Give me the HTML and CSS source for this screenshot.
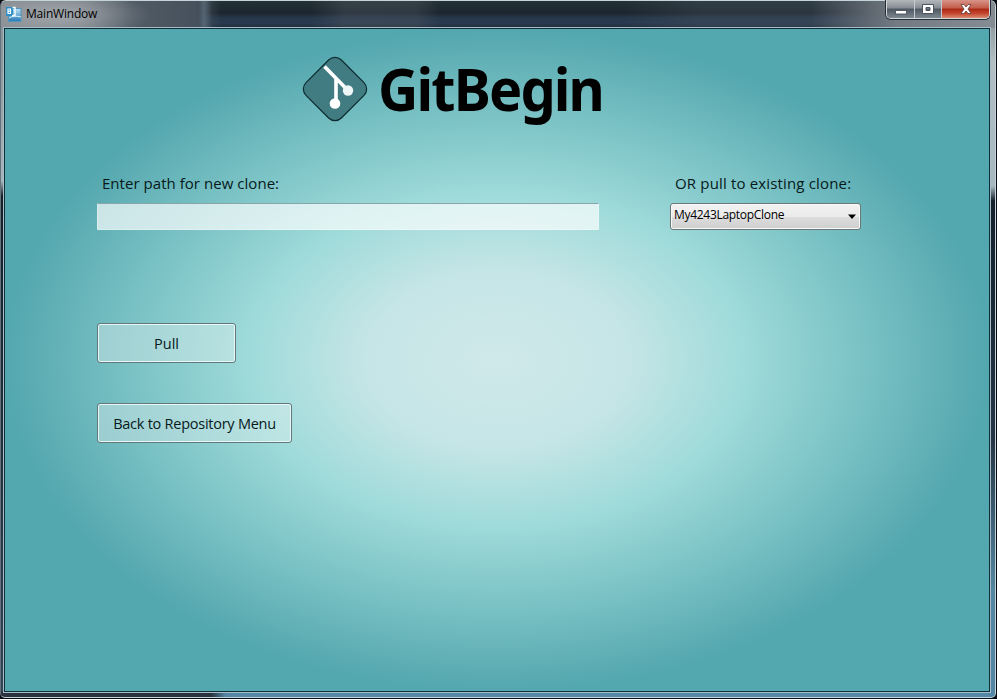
FILE: index.html
```html
<!DOCTYPE html>
<html lang="en">
<head>
<meta charset="utf-8">
<title>MainWindow</title>
<link rel="stylesheet" href="styles.css">
</head>
<body>
<div class="window">
  <header class="titlebar">
    <svg class="app-icon" viewBox="0 0 16 16" width="16" height="16">
      <defs><linearGradient id="sea" x1="0" y1="0" x2="0" y2="1"><stop offset="0" stop-color="#b9e2f6"/><stop offset="1" stop-color="#2478b4"/></linearGradient></defs>
      <rect x="2.500" y="2.500" width="12.500" height="13" fill="url(#sea)" stroke="#5594ba"/>
      <path d="M3 12q4-3 12-1" stroke="#d8f0fa" fill="none"/>
      <rect x="0" y="1" width="7" height="9" fill="#2f8fc5"/>
      <path d="M2 3h2.500v4.500H2zM2 5.200h2.500" fill="none" stroke="#fff" stroke-width="1.200"/>
      <path d="M6.500 1.500h2.500v8H6" fill="none" stroke="#eefaff" stroke-width="1.500"/>
    </svg>
    <span class="title">MainWindow</span>
    <div class="controls">
      <span class="control minimize"><svg width="12" height="6"><rect x=".5" y="1.500" width="11" height="3.500" fill="#fff" stroke="#545c66"/></svg></span>
      <span class="control maximize"><svg width="12" height="10"><path d="M.5.5h11v9H.5zM4 3.500v3h4v-3z" fill="#fff" fill-rule="evenodd" stroke="#4b535e"/></svg></span>
      <span class="control close"><svg width="12" height="10"><path d="M1 .5h3l2 2.500 2-2.500h3L8 5l3 4.500H8L6 7 4 9.500H1L4 5z" fill="#fff" stroke="#643b3b" stroke-width=".8"/></svg></span>
    </div>
  </header>
  <main class="client">
    <div class="brand">
      <svg class="logo" width="66" height="66" viewBox="0 0 66 66">
        <rect x="8" y="8" width="50" height="50" rx="9" transform="rotate(45 33 33)" fill="#417c82" stroke="#0d2b30" stroke-width="1.200"/>
        <path d="M22.500 10.500L46 34.500M34 22v26" fill="none" stroke="#fff" stroke-width="3.600"/>
        <circle cx="46" cy="34.500" r="5.200" fill="#eef6f7"/>
        <circle cx="33" cy="47.500" r="5.300" fill="#fff"/>
      </svg>
      <svg class="wordmark" width="250" height="100"><text x="-1" y="75" textLength="225" lengthAdjust="spacingAndGlyphs">GitBegin</text></svg>
    </div>
    <div class="fields">
      <div class="field">
        <label class="label new-label" for="path">Enter path for new clone:</label>
        <input class="path" id="path" type="text">
      </div>
      <div class="field">
        <span class="label old-label">OR pull to existing clone:</span>
        <div class="combo"><span class="value">My4243LaptopClone</span><svg width="8" height="5"><path d="M0 .5h8L4 5z"/></svg></div>
      </div>
    </div>
    <div class="actions">
      <button class="button pull"><span>Pull</span></button>
      <button class="button back"><span>Back to Repository Menu</span></button>
    </div>
  </main>
</div>
</body>
</html>
```
FILE: styles.css
```css
* { box-sizing: border-box; }
body { margin: 0; background: #080c12; overflow: hidden; font-family: "Open Sans", "Noto Sans", sans-serif; color: #07191b; }
.window {
  width: 996px; height: 698px; padding: 0 5px 5px 3px; display: flex; flex-direction: column;
  border: 1px solid #c5d4d8; border-left-color: #65727b; border-radius: 6px 6px 5px 5px;
  background:
    linear-gradient(90deg, #29323e 0 210px, #5588a6 225px) bottom / 100% 6px no-repeat,
    linear-gradient(#87929a 0, #8b969d 60px, #a9b5bc 180px, #15202b 195px, #263344 500px, #33455a) left / 5px 100% no-repeat,
    linear-gradient(#7d858c 0, #b2bec4 60px, #a9b8c0 185px, #14202c 200px, #273647 440px, #5487a2 590px, #5587a5) right / 6px 100% no-repeat,
    #24303d;
}
.titlebar {
  height: 27px; flex: none; display: flex; align-items: flex-start; margin: 0 -5px 0 -3px; padding-left: 5px;
  border-radius: 5px 5px 0 0;
  background:
    radial-gradient(ellipse 90px 26px at 60px 14px, rgba(182,186,190,.65), transparent),
    linear-gradient(90deg, transparent 197px, rgba(100,116,132,.65) 203px, transparent 211px),
    linear-gradient(90deg, #868b90 0, #777e85 80px, #515b65 130px, #46515d 195px, transparent 220px, transparent 810px, #737a82 895px, #858c94),
    linear-gradient(90deg, transparent 310px, rgba(80,88,98,.42) 345px, rgba(80,88,98,.38) 415px, transparent 440px, transparent 620px, rgba(80,90,102,.3) 700px),
    linear-gradient(#243136 0, #1b252e 12px, #27374b 17px, #293a50 22px, #202c38);
}
.app-icon { margin-top: 5px; }
.title { margin: 5px 0 0 4px; font-size: 12px; line-height: 16px; letter-spacing: -.2px; color: #000; }
.controls { margin: -1px 5px 0 auto; height: 19px; width: 104px; display: flex; border: 1px solid #d2d7da; box-shadow: 0 0 0 1px #252d35; border-top: 0; border-radius: 0 0 5px 5px; overflow: hidden; }
.control { display: flex; align-items: center; justify-content: center; background: linear-gradient(#b3b7bb, #858b92 45%, #4e5761 50%, #7d8790); border-right: 1px solid #c5cbd0; }
.minimize { width: 28px; padding-top: 5px; }
.maximize { width: 27px; }
.close { flex: 1; border: 0; background: linear-gradient(#d89488, #c25b48 45%, #a92815 50%, #c54730 75%, #d98b70); }
.client {
  flex: 1; border: 1px solid #112f3a; outline: 1px solid #a5bec5; display: flex; flex-direction: column;
  background: radial-gradient(ellipse 50% 50% at center, #d0e9ea 0, #c5e5e6 27%, #9fdbda 50%, #53a7ae 100%);
}
.brand { display: flex; height: 144px; padding: 27px 0 0 297px; }
.wordmark { margin: -20px 0 0 11px; }
.wordmark text { font: bold 60px "Noto Sans", "Open Sans", sans-serif; letter-spacing: -2px; fill: #000; }
.fields { display: flex; gap: 71px; padding-left: 92px; }
.field { display: flex; flex-direction: column; }
.label { height: 30px; line-height: 20px; font-size: 15px; padding-left: 5px; white-space: nowrap; }
.new-label { letter-spacing: .04px; }
.old-label { letter-spacing: .16px; }
.path { width: 502px; height: 27px; padding: 0 4px; border: 1px solid rgba(255,255,255,.3); border-top-color: #87a5aa; border-radius: 1px; background: rgba(255,255,255,.68); }
.combo { width: 191px; height: 27px; padding: 0 4px 3px 3px; display: flex; align-items: center; justify-content: space-between; border: 1px solid #6b7779; border-radius: 3px; box-shadow: inset 0 0 0 1px #f7f8f8; background: linear-gradient(#f2f2f2, #ebebeb 50%, #dddddd 50%, #cfcfcf); }
.combo svg { margin-top: 3px; }
.value { font-size: 12px; line-height: 16px; margin-top: -1px; letter-spacing: -.3px; color: #000; }
.actions { display: flex; flex-direction: column; gap: 40px; padding: 93px 0 0 92px; }
.button { height: 40px; padding: 1px 0 0; border: 1px solid #62777a; border-radius: 3px; box-shadow: inset 0 0 0 1px #e8f7f7; background: rgba(235,242,242,.38); font: 14.500px/20px "Open Sans", "Noto Sans", sans-serif; color: #07191b; }
.pull { width: 139px; }
.back { width: 195px; letter-spacing: -.25px; }
```
